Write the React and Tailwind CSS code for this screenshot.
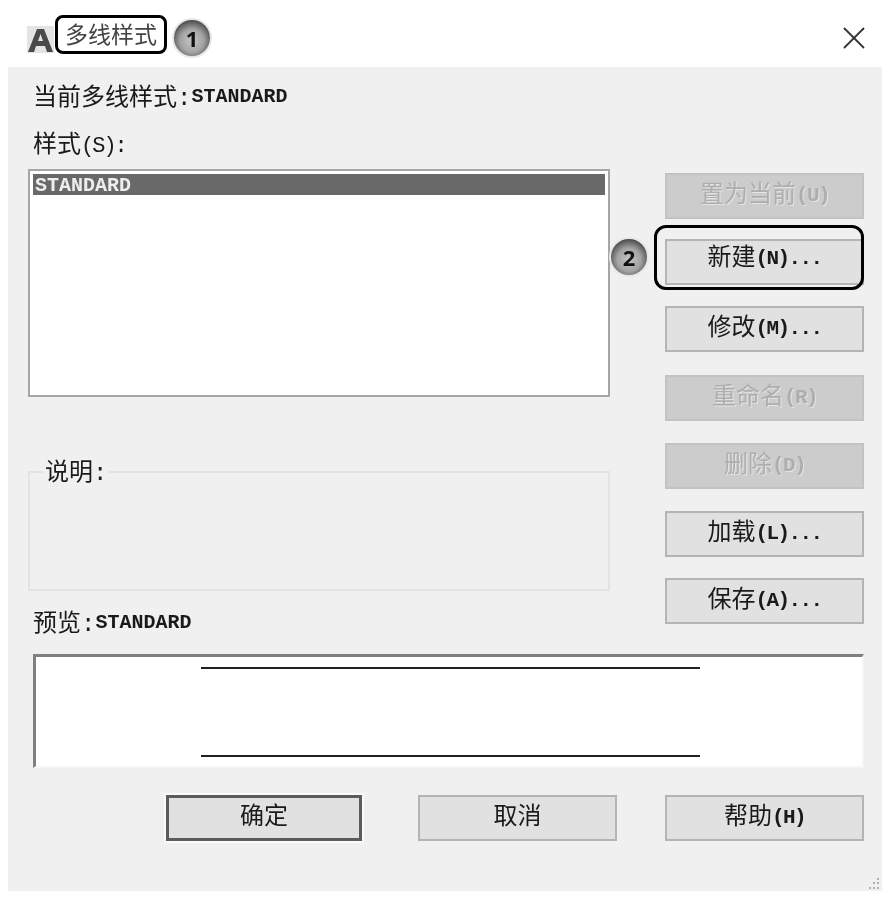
import React from 'react';
import { X } from 'lucide-react';

const Latin = ({ children }) => <span className="text-[20px] font-bold align-[3px]">{children}</span>;
const Small = ({ children }) => <span className="text-[21px] tracking-[-1.6px] font-semibold">{children}</span>;

const Callout = ({ n }) => (
    <div className="w-[40px] h-[40px] rounded-full bg-[#e8e8e8] p-[2px]">
        <div className="w-full h-full rounded-full flex items-center justify-center bg-[radial-gradient(circle_at_50%_58%,#c4c4c4_0%,#a4a4a4_42%,#383838_82%)] text-[#111] text-[22px] font-bold font-['Open_Sans',sans-serif]">
            {n}
        </div>
    </div>
);

const DialogButton = ({ children, disabled, isDefault, className = '' }) => {
    let look = 'bg-[#e1e1e1] border-2 border-[#b4b4b4] text-[#1a1a1a]';
    if (disabled) look = 'bg-[#cccccc] border-2 border-[#c2c2c2] text-[#aeaeae] [text-shadow:1px_1px_0_#e4e4e4]';
    if (isDefault) look = 'bg-[#e1e1e1] border-[3px] border-[#5c5c5c] text-[#1a1a1a] outline-2 outline-[#fafafa]';
    return (
        <button className={`h-[46px] shrink-0 flex items-center justify-center whitespace-nowrap text-[24px] ${look} ${className}`}>
            {children}
        </button>
    );
};

export default function App() {
    return (
        <div className="w-[891px] h-[899px] bg-white text-[24px] text-[#1a1a1a] font-['Liberation_Mono','Noto_Sans_CJK_SC',monospace] blur-[0.6px] overflow-hidden">
            {/* Title bar */}
            <div className="h-[67px] pl-[27px] pr-[18px] flex items-center">
                <svg width="27" height="27" viewBox="0 0 27 27" className="mt-[11px] mr-[1px]">
                    <rect width="27" height="27" fill="#e4e4e4" />
                    <path d="M1 26 L10 3 H17 L26 26 H20 L18 20 H9 L7 26 Z M11 15 H16 L13.5 8 Z" fill="#4a4a4a" fillRule="evenodd" />
                </svg>
                <div className="w-[112px] h-[39px] mt-[2px] pt-[5px] border-[3px] border-black rounded-[8px] flex items-center justify-center text-[23px] text-[#444]">
                    多线样式
                </div>
                <div className="ml-[5px] mt-[9px]">
                    <Callout n="1" />
                </div>
                <X className="ml-auto mt-[9px] text-[#333]" size={38} strokeWidth={1.15} />
            </div>

            {/* Dialog body */}
            <div className="relative ml-[8px] w-[874px] h-[824px] bg-[#f0f0f0] pl-[20px] pr-[18px] pt-[13px]">
                <div className="flex items-start">
                    <div className="w-[582px] shrink-0">
                        <div className="h-[30px] pl-[5px] leading-[34px] whitespace-nowrap">当前多线样式:<Latin>STANDARD</Latin></div>
                        <div className="h-[30px] mt-[19px] pl-[5px] leading-[34px] whitespace-nowrap">样式<span className="text-[22px] tracking-[-2px]">(S):</span></div>
                        <div className="h-[228px] mt-[10px] bg-white border-2 border-[#a6a6a6] p-[3px]">
                            <div className="h-[21px] bg-[#696969] text-[#eeeeee] leading-[21px] pl-[2px]">
                                <span className="text-[20px] font-bold">STANDARD</span>
                            </div>
                        </div>
                        <div className="relative h-[120px] mt-[74px] border-2 border-[#e3e3e3]">
                            <div className="absolute -top-[16px] left-[13px] h-[34px] px-[2px] leading-[34px] bg-[#f0f0f0]">说明:</div>
                        </div>
                        <div className="h-[30px] mt-[15px] pl-[5px] leading-[34px] whitespace-nowrap">预览:<Latin>STANDARD</Latin></div>
                    </div>
                    <div className="ml-[55px] mt-[93px] w-[199px] shrink-0 flex flex-col">
                        <DialogButton disabled>置为当前<Small>(U)</Small></DialogButton>
                        <div className="relative mt-[20px]">
                            <DialogButton className="w-full pb-[6px]">新建<Small>(N)...</Small></DialogButton>
                            <div className="absolute -top-[14px] -left-[11px] right-0 h-[65px] border-[3px] border-black rounded-[12px]" />
                            <div className="absolute -top-[2px] -left-[56px]">
                                <Callout n="2" />
                            </div>
                        </div>
                        <DialogButton className="mt-[21px]">修改<Small>(M)...</Small></DialogButton>
                        <DialogButton disabled className="mt-[23px]">重命名<Small>(R)</Small></DialogButton>
                        <DialogButton disabled className="mt-[22px]">删除<Small>(D)</Small></DialogButton>
                        <DialogButton className="mt-[22px]">加载<Small>(L)...</Small></DialogButton>
                        <DialogButton className="mt-[21px]">保存<Small>(A)...</Small></DialogButton>
                    </div>
                </div>

                {/* Preview */}
                <div className="ml-[5px] mt-[18px] w-[831px] h-[114px] bg-white border-t-[3px] border-l-[3px] border-r-2 border-b-2 border-t-[#808080] border-l-[#808080] border-r-[#f6f6f6] border-b-[#f6f6f6] pt-[10px] pl-[165px]">
                    <div className="w-[499px] h-[2px] bg-[#222]" />
                    <div className="w-[499px] h-[2px] bg-[#222] mt-[86px]" />
                </div>

                {/* Bottom buttons */}
                <div className="flex mt-[27px] ml-[138px]">
                    <DialogButton isDefault className="w-[196px]">确定</DialogButton>
                    <DialogButton className="w-[199px] ml-[56px]">取消</DialogButton>
                    <DialogButton className="w-[199px] ml-[48px]">帮助<Small>(H)</Small></DialogButton>
                </div>

                {/* Resize grip */}
                <svg width="16" height="14" viewBox="0 0 16 14" className="absolute right-[1px] bottom-0" fill="#b0b0b0">
                    <rect x="12" y="1" width="2" height="2" />
                    <rect x="8" y="5" width="2" height="2" />
                    <rect x="12" y="5" width="2" height="2" />
                    <rect x="4" y="10" width="2" height="2" />
                    <rect x="8" y="10" width="2" height="2" />
                    <rect x="12" y="10" width="2" height="2" />
                </svg>
            </div>
        </div>
    );
}
